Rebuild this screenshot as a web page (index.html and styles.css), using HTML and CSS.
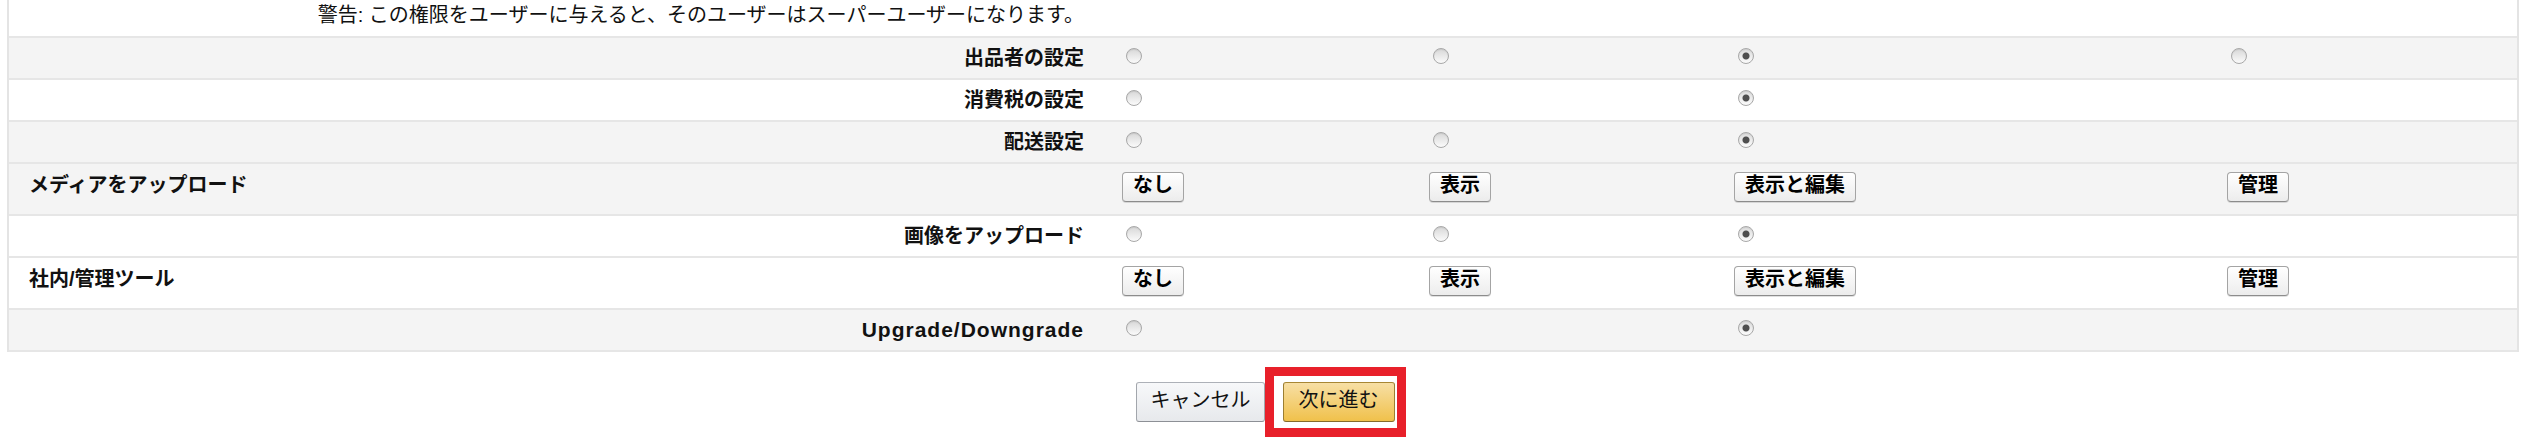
FILE: index.html
```html
<!DOCTYPE html>
<html lang="ja">
<head>
    <meta charset="UTF-8">
    <meta name="viewport" content="width=device-width, initial-scale=1.0">
    <title>ユーザー権限の設定</title>
    <link rel="stylesheet" href="styles.css">
</head>
<body>
    <form class="perm-form">
        <div class="perm-table">
            <div class="perm-row warn-row">
                <div class="perm-label">警告: この権限をユーザーに与えると、そのユーザーはスーパーユーザーになります。</div>
            </div>

            <div class="perm-row shaded">
                <div class="perm-label">出品者の設定</div>
                <div class="perm-cell"><input type="radio" name="seller" value="none"></div>
                <div class="perm-cell"><input type="radio" name="seller" value="view"></div>
                <div class="perm-cell"><input type="radio" name="seller" value="edit" checked></div>
                <div class="perm-cell"><input type="radio" name="seller" value="admin"></div>
            </div>

            <div class="perm-row">
                <div class="perm-label">消費税の設定</div>
                <div class="perm-cell"><input type="radio" name="tax" value="none"></div>
                <div class="perm-cell"></div>
                <div class="perm-cell"><input type="radio" name="tax" value="edit" checked></div>
            </div>

            <div class="perm-row shaded">
                <div class="perm-label">配送設定</div>
                <div class="perm-cell"><input type="radio" name="shipping" value="none"></div>
                <div class="perm-cell"><input type="radio" name="shipping" value="view"></div>
                <div class="perm-cell"><input type="radio" name="shipping" value="edit" checked></div>
            </div>

            <div class="perm-row group-row shaded">
                <div class="group-label">メディアをアップロード</div>
                <div class="perm-cell"><button type="button" class="level-btn">なし</button></div>
                <div class="perm-cell"><button type="button" class="level-btn">表示</button></div>
                <div class="perm-cell"><button type="button" class="level-btn">表示と編集</button></div>
                <div class="perm-cell"><button type="button" class="level-btn">管理</button></div>
            </div>

            <div class="perm-row">
                <div class="perm-label">画像をアップロード</div>
                <div class="perm-cell"><input type="radio" name="images" value="none"></div>
                <div class="perm-cell"><input type="radio" name="images" value="view"></div>
                <div class="perm-cell"><input type="radio" name="images" value="edit" checked></div>
            </div>

            <div class="perm-row group-row">
                <div class="group-label">社内/管理ツール</div>
                <div class="perm-cell"><button type="button" class="level-btn">なし</button></div>
                <div class="perm-cell"><button type="button" class="level-btn">表示</button></div>
                <div class="perm-cell"><button type="button" class="level-btn">表示と編集</button></div>
                <div class="perm-cell"><button type="button" class="level-btn">管理</button></div>
            </div>

            <div class="perm-row shaded">
                <div class="perm-label latin-label">Upgrade/Downgrade</div>
                <div class="perm-cell"><input type="radio" name="upgrade" value="none"></div>
                <div class="perm-cell"></div>
                <div class="perm-cell"><input type="radio" name="upgrade" value="edit" checked></div>
            </div>
        </div>

        <div class="form-actions">
            <button type="button" class="btn-cancel">キャンセル</button>
            <span class="highlight">
                <button type="submit" class="btn-next">次に進む</button>
            </span>
        </div>
    </form>
</body>
</html>
```

FILE: styles.css
```css
body {
    margin: 0;
    font-family: "Liberation Sans", "Noto Sans CJK JP", sans-serif;
    font-size: 20px;
    color: #111;
    background: #fff;
}

.perm-table {
    margin: 0 22px 0 7px;
    border-left: 2px solid #e4e4e4;
    border-right: 2px solid #e4e4e4;
}

.perm-row {
    display: grid;
    grid-template-columns: 1113px 307px 305px 493px 1fr;
    align-items: center;
    height: 40px;
    background: #fff;
    border-bottom: 2px solid #e6e6e6;
}

.perm-row.shaded {
    background: #f4f4f4;
}

.warn-row {
    height: 33px;
    padding-top: 3px;
    align-items: start;
}

.warn-row .perm-label {
    font-weight: normal;
}

.perm-label {
    text-align: right;
    padding-right: 38px;
    font-weight: bold;
    line-height: 24px;
}

.latin-label {
    font-size: 21px;
    letter-spacing: 1px;
}

.group-row {
    height: 50px;
    align-items: start;
}

.group-label {
    padding: 9px 0 0 20px;
    font-weight: bold;
    line-height: 24px;
}

.perm-cell input[type="radio"] {
    -webkit-appearance: none;
    appearance: none;
    display: block;
    width: 16px;
    height: 16px;
    margin: 0 0 4px 4px;
    border: 1px solid #a8a8a8;
    border-radius: 50%;
    background: linear-gradient(#d8d8d8, #fbfbfb);
    box-shadow: inset 0 1px 1px rgba(0, 0, 0, 0.08);
}

.perm-cell input[type="radio"]:checked {
    background: radial-gradient(circle, #4f4f4f 0, #4f4f4f 3px, rgba(79, 79, 79, 0) 4px),
                linear-gradient(#dcdcdc, #fbfbfb);
}

.level-btn {
    display: block;
    margin-top: 8px;
    height: 30px;
    padding: 0 10px 4px;
    font: inherit;
    font-weight: bold;
    line-height: 24px;
    color: #000;
    border: 1px solid #a4a4a4;
    border-bottom-color: #8c8c8c;
    border-radius: 4px;
    background: linear-gradient(#ffffff, #ececec);
    box-shadow: 0 1px 0 rgba(0, 0, 0, 0.12);
}

.form-actions {
    display: flex;
    justify-content: center;
    align-items: center;
    margin-top: 15px;
}

.btn-cancel,
.btn-next {
    height: 40px;
    font: inherit;
    line-height: 34px;
    padding: 0 13px 4px 14px;
    color: #111;
    border: 1px solid;
    border-radius: 3px;
    cursor: pointer;
}

.btn-cancel {
    border-color: #adb1b8 #a2a6ac #8d9096;
    background: linear-gradient(#f7f8fa, #e7e9ec);
}

.highlight {
    display: block;
    border: 9px solid #e8202a;
    padding: 6px 2px 6px 9px;
    background: #fff;
}

.btn-next {
    display: block;
    padding: 0 15px 4px;
    border-color: #a88734 #9c7e31 #846a29;
    background: linear-gradient(#f7dfa5, #f0c14b);
}
```
